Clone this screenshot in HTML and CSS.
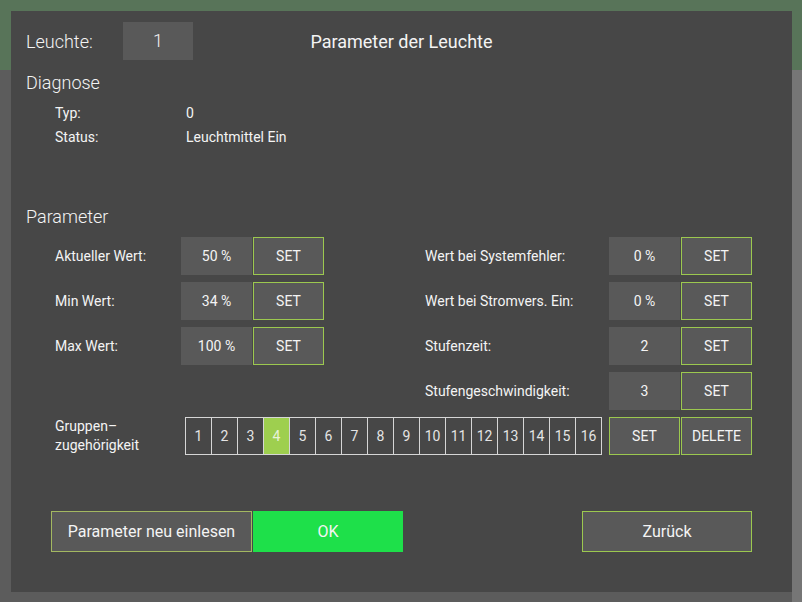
FILE: index.html
```html
<!DOCTYPE html>
<html lang="de">
<head>
    <meta charset="UTF-8">
    <meta name="viewport" content="width=device-width, initial-scale=1.0">
    <title>Parameter der Leuchte</title>
    <link rel="stylesheet" href="styles.css">
</head>
<body>
    <div class="dialog">
        <header class="head">
            <div class="lamp">
                <span class="lamp-label">Leuchte:</span>
                <span class="lamp-no">1</span>
            </div>
            <h1 class="title">Parameter der Leuchte</h1>
            <div></div>
        </header>

        <h2 class="section section-diag">Diagnose</h2>
        <dl class="diag">
            <dt>Typ:</dt><dd>0</dd>
            <dt>Status:</dt><dd>Leuchtmittel Ein</dd>
        </dl>

        <h2 class="section section-param">Parameter</h2>
        <div class="params">
            <div class="col col-left">
                <div class="row"><span class="label">Aktueller Wert:</span><span class="value">50 %</span><button class="btn">SET</button></div>
                <div class="row"><span class="label">Min Wert:</span><span class="value">34 %</span><button class="btn">SET</button></div>
                <div class="row"><span class="label">Max Wert:</span><span class="value">100 %</span><button class="btn">SET</button></div>
            </div>
            <div class="col col-right">
                <div class="row"><span class="label">Wert bei Systemfehler:</span><span class="value">0 %</span><button class="btn">SET</button></div>
                <div class="row"><span class="label">Wert bei Stromvers. Ein:</span><span class="value">0 %</span><button class="btn">SET</button></div>
                <div class="row"><span class="label">Stufenzeit:</span><span class="value">2</span><button class="btn">SET</button></div>
                <div class="row"><span class="label">Stufengeschwindigkeit:</span><span class="value">3</span><button class="btn">SET</button></div>
            </div>
        </div>

        <div class="groups">
            <span class="groups-label">Gruppen–<br>zugehörigkeit</span>
            <ul class="cells">
                <li>1</li><li>2</li><li>3</li><li class="active">4</li>
                <li>5</li><li>6</li><li>7</li><li>8</li>
                <li>9</li><li>10</li><li>11</li><li>12</li>
                <li>13</li><li>14</li><li>15</li><li>16</li>
            </ul>
            <button class="btn btn-set">SET</button>
            <button class="btn">DELETE</button>
        </div>

        <div class="actions">
            <button class="btn btn-big btn-reload">Parameter neu einlesen</button>
            <button class="btn btn-big btn-ok">OK</button>
            <button class="btn btn-big btn-back">Zurück</button>
        </div>
    </div>
</body>
</html>
```

FILE: styles.css
```css
* {
    margin: 0;
    padding: 0;
    box-sizing: border-box;
}

li {
    list-style: none;
}

body {
    width: 802px;
    height: 602px;
    overflow: hidden;
    font-family: Roboto, "Liberation Sans", sans-serif;
    color: #f4f4f4;
    background:
        linear-gradient(#587459 0, #587459 70px, transparent 70px),
        linear-gradient(to right, #5c5c5c 0, #5c5c5c 792px, #767676 792px);
}

.dialog {
    width: 781px;
    height: 581px;
    margin: 11px;
    padding: 11px 15px 0;
    background: #474747;
}

/* kopfzeile */
.head {
    display: grid;
    grid-template-columns: 1fr auto 1fr;
    align-items: center;
    height: 38px;
}

.lamp {
    display: flex;
    align-items: center;
}

.lamp-label {
    width: 97px;
    font-size: 18px;
    font-weight: 300;
}

.lamp-no {
    width: 70px;
    height: 38px;
    line-height: 38px;
    text-align: center;
    background: #595959;
    font-size: 18px;
    font-weight: 300;
}

.title {
    font-size: 18px;
    font-weight: 400;
}

.section {
    font-size: 18px;
    font-weight: 300;
    line-height: 22px;
}

.section-diag {
    margin-top: 12px;
}

.section-param {
    margin-top: 57px;
}

/* diagnose */
.diag {
    display: grid;
    grid-template-columns: 131px auto;
    margin-top: 7px;
    padding-left: 29px;
    font-size: 14px;
    line-height: 24px;
}

/* parameter */
.params {
    display: flex;
    gap: 101px;
    margin-top: 9px;
    padding-left: 29px;
}

.col {
    display: flex;
    flex-direction: column;
    gap: 7px;
}

.row {
    display: flex;
    align-items: center;
    gap: 1px;
    height: 38px;
    font-size: 14px;
}

.col-left .label {
    width: 125px;
}

.col-right .label {
    width: 183px;
}

.value {
    width: 71px;
    height: 38px;
    line-height: 38px;
    text-align: center;
    background: #595959;
}

.btn {
    width: 71px;
    height: 38px;
    background: #595959;
    border: 1px solid #9cc84f;
    color: #f4f4f4;
    font-family: inherit;
    font-size: 14px;
}

/* gruppen */
.groups {
    display: flex;
    align-items: center;
    gap: 1px;
    margin-top: 7px;
    padding-left: 29px;
    font-size: 14px;
}

.groups-label {
    width: 129px;
    line-height: 19px;
}

.cells {
    display: grid;
    grid-template-columns: repeat(16, 25px);
    gap: 1px;
    padding: 1px;
    height: 38px;
    background: #d6d6d6;
}

.cells li {
    display: flex;
    align-items: center;
    justify-content: center;
    background: #474747;
    color: #e4e4e4;
}

.cells li.active {
    background: #9ecf4f;
    color: #e8f2d8;
}

.btn-set {
    margin-left: 6px;
}

/* buttons unten */
.actions {
    display: flex;
    gap: 1px;
    margin-top: 56px;
    padding: 0 25px;
}

.btn-big {
    height: 41px;
    font-size: 16px;
}

.btn-reload {
    width: 201px;
    border-color: #a3b861;
}

.btn-ok {
    width: 150px;
    background: #1ee04a;
    border-color: #1ee04a;
}

.btn-back {
    width: 170px;
    margin-left: auto;
}
```
